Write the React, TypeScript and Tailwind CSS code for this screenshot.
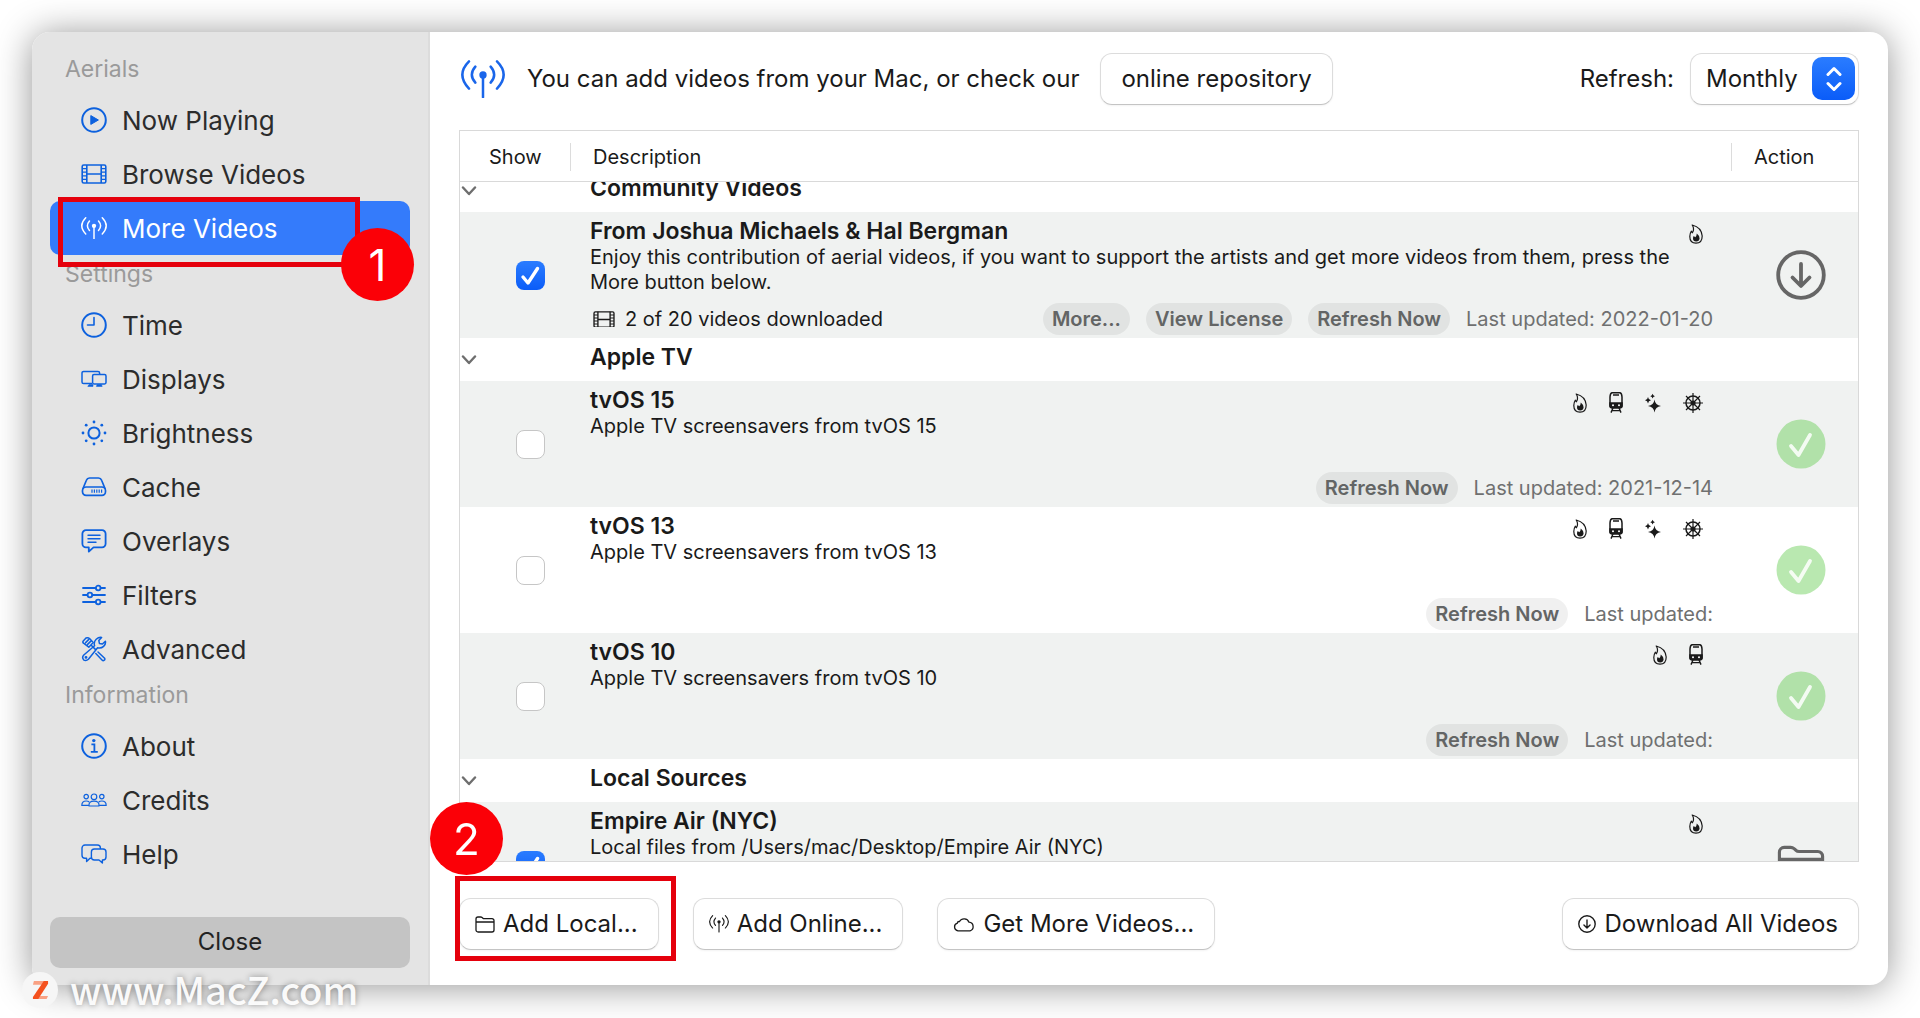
import React, { useLayoutEffect, useRef, useState } from "react";

type IconProps = { className?: string };

const AntennaIcon = ({ className }: IconProps) => (
  <svg viewBox="0 0 132 116" fill="none" stroke="currentColor" strokeWidth="7.5" strokeLinecap="round" className={className}>
    <path d="M24 4Q-16 44 24 86M108 4Q148 44 108 86M43 20Q22 44 43 68M89 20Q110 44 89 68M66 45V112" />
    <circle cx="66" cy="45" r="11" fill="currentColor" stroke="none" />
  </svg>
);

const PlayIcon = ({ className }: IconProps) => (
  <svg viewBox="0 0 26 26" fill="none" stroke="currentColor" strokeWidth="2" className={className}>
    <circle cx="13" cy="13" r="11.8" />
    <path d="M9.8 8.6v8.8l7.6-4.4z" fill="currentColor" strokeWidth="1" strokeLinejoin="round" />
  </svg>
);

const FilmIcon = ({ className }: IconProps) => (
  <svg viewBox="0 0 26 20" fill="none" stroke="currentColor" strokeWidth="1.6" className={className}>
    <rect x="1.2" y="1" width="23.6" height="18" rx="1.6" />
    <path d="M5.8 1v18M20.2 1v18M5.8 10h14.4" />
    <path d="M1.2 4.6h4.6M1.2 8.2h4.6M1.2 11.8h4.6M1.2 15.4h4.6M20.2 4.6h4.6M20.2 8.2h4.6M20.2 11.8h4.6M20.2 15.4h4.6" strokeWidth="1.2" />
  </svg>
);

const ClockIcon = ({ className }: IconProps) => (
  <svg viewBox="0 0 26 26" fill="none" stroke="currentColor" strokeWidth="2" className={className}>
    <circle cx="13" cy="13" r="11.8" />
    <path d="M13 5.5V13H6.5" strokeWidth="1.6" strokeLinecap="round" strokeLinejoin="round" />
  </svg>
);

const DisplaysIcon = ({ className }: IconProps) => (
  <svg viewBox="0 0 26 18" fill="none" stroke="currentColor" strokeWidth="1.5" className={className}>
    <path d="M11 13.6H2.6A1.6 1.6 0 0 1 1 12V3a1.6 1.6 0 0 1 1.6-1.6H17A1.6 1.6 0 0 1 18.6 3v1.4" />
    <rect x="11.6" y="4.6" width="13.4" height="9.4" rx="1.4" />
    <path d="M8 14.6h4v1.8H6.8zM16.2 14.6h4.2l.8 1.8h-5.8z" fill="currentColor" strokeWidth="0.6" />
  </svg>
);

const SunIcon = ({ className }: IconProps) => (
  <svg viewBox="0 0 26 26" fill="currentColor" className={className}>
    <circle cx="13" cy="13" r="5.6" fill="none" stroke="currentColor" strokeWidth="2" />
    <circle cx="13" cy="2" r="1.4" />
    <circle cx="13" cy="24" r="1.4" />
    <circle cx="2" cy="13" r="1.4" />
    <circle cx="24" cy="13" r="1.4" />
    <circle cx="5.2" cy="5.2" r="1.4" />
    <circle cx="20.8" cy="5.2" r="1.4" />
    <circle cx="5.2" cy="20.8" r="1.4" />
    <circle cx="20.8" cy="20.8" r="1.4" />
  </svg>
);

const DriveIcon = ({ className }: IconProps) => (
  <svg viewBox="0 0 26 20" fill="none" stroke="currentColor" strokeWidth="1.7" className={className}>
    <path d="M1.8 12 5.4 3.2Q6.2 1 8.5 1h9q2.3 0 3.1 2.2L24.2 12" />
    <rect x="1.5" y="10" width="23" height="8.4" rx="3.6" />
    <path d="M11 12.6v3.2M13.4 12.6v3.2M15.8 12.6v3.2M18.2 12.6v3.2M20.6 12.6v3.2" strokeWidth="1.2" />
  </svg>
);

const BubbleIcon = ({ className }: IconProps) => (
  <svg viewBox="0 0 26 24" fill="none" stroke="currentColor" strokeWidth="1.8" strokeLinejoin="round" className={className}>
    <path d="M5 1.2h16a3.6 3.6 0 0 1 3.6 3.6v10a3.6 3.6 0 0 1-3.6 3.6h-8.5L7.8 22.6v-4.2H5a3.6 3.6 0 0 1-3.6-3.6v-10A3.6 3.6 0 0 1 5 1.2z" />
    <path d="M7 6.3h12M7 9.8h12M7 13.3h8" strokeWidth="1.4" strokeLinecap="round" />
  </svg>
);

const SlidersIcon = ({ className }: IconProps) => (
  <svg viewBox="0 0 26 22" fill="none" stroke="currentColor" strokeWidth="1.8" strokeLinecap="round" className={className}>
    <path d="M2 4h12.6M20 4h4M2 11h4.2M11.6 11H24M2 18h12.6M20 18h4" />
    <circle cx="17.2" cy="4" r="2.3" />
    <circle cx="8.9" cy="11" r="2.3" />
    <circle cx="17.2" cy="18" r="2.3" />
  </svg>
);

const ToolsIcon = ({ className }: IconProps) => (
  <svg viewBox="0 0 26 26" fill="none" stroke="currentColor" strokeWidth="1.5" strokeLinejoin="round" strokeLinecap="round" className={className}>
    <path d="M2 5.2 5 2q2-1 3.8.8l3.4 3.8-4.4 4.6-4.6-3.6Q1.4 6.8 2 5.2zM4.6 6.6l3-3M6.6 8.4l3-3" />
    <path d="M10.5 9.5 14.6 13.6M17 16l6.6 6.2q.8 1.6-.6 2.2-1 .6-2-.4L14.8 17.6" />
    <path d="M13.6 9.8Q12.4 6 15.2 3.2 17.6 1 20.6 1.4L17.8 4.4l.6 3 3 .6 3-2.8q.6 3-1.8 5.2-2.6 2.4-6 1.4L7.4 23.2q-2.4 2.2-4.8.6-2-2.2.2-4.8z" />
    <circle cx="5" cy="21.4" r=".7" />
  </svg>
);

const InfoIcon = ({ className }: IconProps) => (
  <svg viewBox="0 0 26 26" fill="none" stroke="currentColor" strokeWidth="2" className={className}>
    <circle cx="13" cy="13" r="11.8" />
    <circle cx="12.8" cy="7.6" r="1.7" fill="currentColor" stroke="none" />
    <path d="M10.4 11.4h3v7.2M9.8 18.8h7" strokeWidth="1.8" />
  </svg>
);

const PeopleIcon = ({ className }: IconProps) => (
  <svg viewBox="0 0 26 14" fill="none" stroke="currentColor" strokeWidth="1.2" strokeLinejoin="round" className={className}>
    <circle cx="13" cy="3.8" r="2.8" />
    <circle cx="5.2" cy="3.6" r="2.2" />
    <circle cx="20.8" cy="3.6" r="2.2" />
    <path d="M8 13q-.6-4.8 5-4.8T18 13zM7.4 12.4H.8Q.8 8 5.2 8q2 0 3 1M18.6 12.4h6.6Q25.2 8 20.8 8q-2 0-3 1" />
  </svg>
);

const ChatsIcon = ({ className }: IconProps) => (
  <svg viewBox="0 0 26 20" fill="none" stroke="currentColor" strokeWidth="1.4" strokeLinejoin="round" className={className}>
    <path d="M10.8 14.2H9L5.6 17.6v-3.4H4a3 3 0 0 1-3-3V4a3 3 0 0 1 3-3h12.4a3 3 0 0 1 3 3v1" />
    <path d="M13.4 5H22a3 3 0 0 1 3 3v5a3 3 0 0 1-3 3h-.6v3L18 16h-4.6a3 3 0 0 1-3-3V8a3 3 0 0 1 3-3z" />
  </svg>
);

const FolderIcon = ({ className }: IconProps) => (
  <svg viewBox="0 0 20 17" fill="none" stroke="currentColor" strokeWidth="1.3" strokeLinejoin="round" className={className}>
    <path d="M1 14V3a2 2 0 0 1 2-2h2.7q.8 0 1.4.5l.8.7q.5.5 1.3.5H17a2 2 0 0 1 2 2V14a2 2 0 0 1-2 2H3a2 2 0 0 1-2-2zM1 6h18" />
  </svg>
);

const CloudIcon = ({ className }: IconProps) => (
  <svg viewBox="0 0 22 15" fill="none" stroke="currentColor" strokeWidth="1.3" className={className}>
    <path d="M5 13.8a3.9 3.9 0 0 1-.7-7.6q.2-1.9 2.2-1.7A5.3 5.3 0 0 1 16 5.2a4.4 4.4 0 0 1 1 8.6z" />
  </svg>
);

const DownloadIcon = ({ className }: IconProps) => (
  <svg viewBox="0 0 50 50" fill="none" stroke="currentColor" strokeWidth="3.8" strokeLinecap="round" strokeLinejoin="round" className={className}>
    <circle cx="25" cy="25" r="22.8" />
    <path d="M25 14v21.5M16.5 27.5 25 36l8.5-8.5" />
  </svg>
);

const FlameIcon = () => (
  <svg viewBox="0 0 14 20" fill="none" stroke="currentColor" strokeWidth="1.2" strokeLinejoin="round" className="h-5 w-[14px]">
    <path d="M3.2 1Q12.6 3.4 13.2 12 13.2 19.2 7 19.2.8 19 .8 12.4.8 9.6 2.4 7.2l1 1.6Q5.8 5 3.2 1z" />
    <path d="M7.8 9.4q3 2.4 2.8 5Q10.2 17.4 7.2 17.4 4 17.2 4 14.4q0-1.4.8-2.4l1.4 1.2q1.6-1.6 1.6-3.8z" fill="currentColor" stroke="none" />
  </svg>
);

const TramIcon = () => (
  <svg viewBox="0 0 14 21" fill="none" stroke="currentColor" strokeWidth="1.5" className="h-[21px] w-[14px]">
    <path d="M3 .8h8q1.8.6 2 4.2v8.6q0 2.2-2 2.2H3q-2 0-2-2.2V5Q1.2 1.4 3 .8zM4 3h6" />
    <path d="M1 11h12v2.6q0 2.2-2 2.2H3q-2 0-2-2.2z" fill="currentColor" />
    <circle cx="4" cy="13.2" r="1" fill="#fff" stroke="none" />
    <circle cx="10" cy="13.2" r="1" fill="#fff" stroke="none" />
    <path d="M4 16 2 20.6M10 16l2 4.6M3 18.6h8" strokeWidth="1.4" />
  </svg>
);

const SparklesIcon = () => (
  <svg viewBox="0 0 16 20" fill="currentColor" className="h-5 w-4">
    <path d="M9.5 6.5q.7 5.8 6.5 6.5-5.8.7-6.5 6.5Q8.8 13.7 3 13q5.8-.7 6.5-6.5zM3 4q.4 2.9 3 3.3-2.6.4-3 3.3Q2.6 7.7 0 7.3 2.6 6.9 3 4zM7.6.8q.4 2 2.3 2.4-1.9.4-2.3 2.4-.4-2-2.3-2.4 1.9-.4 2.3-2.4z" />
  </svg>
);

const HelmIcon = () => (
  <svg viewBox="0 0 20 20" fill="none" stroke="currentColor" strokeWidth="1.2" className="size-5">
    <circle cx="10" cy="10" r="7" strokeWidth="1.5" />
    <circle cx="10" cy="10" r="2" fill="currentColor" />
    <path d="M10 0v20M0 10h20M3 3l14 14M17 3 3 17" />
  </svg>
);

const tagIcons = {
  flame: FlameIcon,
  tram: TramIcon,
  sparkles: SparklesIcon,
  helm: HelmIcon,
};

const menu = [
  {
    heading: "Aerials",
    items: [
      { label: "Now Playing", icon: <PlayIcon className="w-[26px]" /> },
      { label: "Browse Videos", icon: <FilmIcon className="w-[26px]" /> },
      { label: "More Videos", icon: <AntennaIcon className="w-[26px]" /> },
    ],
  },
  {
    heading: "Settings",
    items: [
      { label: "Time", icon: <ClockIcon className="w-[26px]" /> },
      { label: "Displays", icon: <DisplaysIcon className="w-[26px]" /> },
      { label: "Brightness", icon: <SunIcon className="w-[26px]" /> },
      { label: "Cache", icon: <DriveIcon className="w-[26px]" /> },
      { label: "Overlays", icon: <BubbleIcon className="w-[26px]" /> },
      { label: "Filters", icon: <SlidersIcon className="w-[26px]" /> },
      { label: "Advanced", icon: <ToolsIcon className="w-[26px]" /> },
    ],
  },
  {
    heading: "Information",
    items: [
      { label: "About", icon: <InfoIcon className="w-[26px]" /> },
      { label: "Credits", icon: <PeopleIcon className="w-[26px]" /> },
      { label: "Help", icon: <ChatsIcon className="w-[26px]" /> },
    ],
  },
];

interface Source {
  name: string;
  description: string;
  checked: boolean;
  striped: boolean;
  tags: (keyof typeof tagIcons)[];
  progress?: string;
  actions: string[];
  updated?: string;
  status: "download" | "done" | "folder";
}

const groups: { name: string; sources: Source[] }[] = [
  {
    name: "Community Videos",
    sources: [
      {
        name: "From Joshua Michaels & Hal Bergman",
        description:
          "Enjoy this contribution of aerial videos, if you want to support the artists and get more videos from them, press the More button below.",
        checked: true,
        striped: true,
        tags: ["flame"],
        progress: "2 of 20 videos downloaded",
        actions: ["More...", "View License", "Refresh Now"],
        updated: "Last updated: 2022-01-20",
        status: "download",
      },
    ],
  },
  {
    name: "Apple TV",
    sources: [
      {
        name: "tvOS 15",
        description: "Apple TV screensavers from tvOS 15",
        checked: false,
        striped: true,
        tags: ["flame", "tram", "sparkles", "helm"],
        actions: ["Refresh Now"],
        updated: "Last updated: 2021-12-14",
        status: "done",
      },
      {
        name: "tvOS 13",
        description: "Apple TV screensavers from tvOS 13",
        checked: false,
        striped: false,
        tags: ["flame", "tram", "sparkles", "helm"],
        actions: ["Refresh Now"],
        updated: "Last updated:",
        status: "done",
      },
      {
        name: "tvOS 10",
        description: "Apple TV screensavers from tvOS 10",
        checked: false,
        striped: true,
        tags: ["flame", "tram"],
        actions: ["Refresh Now"],
        updated: "Last updated:",
        status: "done",
      },
    ],
  },
  {
    name: "Local Sources",
    sources: [
      {
        name: "Empire Air (NYC)",
        description: "Local files from /Users/mac/Desktop/Empire Air (NYC)",
        checked: true,
        striped: true,
        tags: ["flame"],
        actions: [],
        status: "folder",
      },
    ],
  },
];

const StepBadge = ({ step, className }: { step: number; className: string }) => (
  <span
    className={`pointer-events-none absolute z-30 flex size-[73px] items-center justify-center rounded-full bg-[#fb0007] text-[44px] text-white ${className}`}
  >
    {step}
  </span>
);

const PushButton = ({ icon, children }: { icon?: React.ReactNode; children: React.ReactNode }) => (
  <button
    type="button"
    className={`flex h-[52px] items-center gap-2 rounded-xl border border-[#dcdcdc] border-b-[#c4c4c4] bg-white pr-5 text-2xl whitespace-nowrap shadow-xs ${
      icon ? "pl-[15px]" : "pl-5"
    }`}
  >
    {icon}
    {children}
  </button>
);

const StatusIcon = ({ status }: { status: Source["status"] }) => {
  if (status === "download") return <DownloadIcon className="size-[50px]" />;
  if (status === "folder") return <FolderIcon className="w-[48px]" />;
  return (
    <svg viewBox="0 0 50 50" className="size-[50px]">
      <circle cx="25" cy="25" r="24.5" fill="#6ace57" fillOpacity=".47" />
      <path d="m15 27 7.500 9 11.500-20" fill="none" stroke="#fff" strokeOpacity=".85" strokeWidth="3.8" strokeLinecap="round" strokeLinejoin="round" />
    </svg>
  );
};

const SourceRow = ({ source }: { source: Source }) => {
  const [checked, setChecked] = useState(source.checked);

  return (
    <tr className={source.striped ? "bg-[#f0f2f1]" : "bg-white"}>
      <td className="h-[126px] p-0">
        <label className="relative ml-[56px] block size-[29px]">
          <input
            type="checkbox"
            aria-label={source.name}
            checked={checked}
            onChange={(e) => setChecked(e.target.checked)}
            className="block size-[29px] appearance-none rounded-lg border border-[#c6c6c6] bg-white checked:border-0 checked:bg-linear-to-b checked:from-[#2a7cff] checked:to-[#0a5cf8]"
          />
          {checked && (
            <svg viewBox="0 0 29 29" className="pointer-events-none absolute inset-0 size-[29px]">
              <path d="m7 16 5 6 9.500-14.500" fill="none" stroke="#fff" strokeWidth="3.4" strokeLinecap="round" strokeLinejoin="round" />
            </svg>
          )}
        </label>
      </td>
      <td className="h-[126px] p-0">
        <div className="flex h-[126px] flex-col pt-1.5 pr-[18px] pb-[3px]">
          <div className="flex items-center justify-between pr-2.5">
            <h3 className="text-[23px] leading-[27px] font-semibold">{source.name}</h3>
            <div className="flex h-[27px] items-center gap-[22px] pt-1">
              {source.tags.map((tag) => {
                const Tag = tagIcons[tag];
                return <Tag key={tag} />;
              })}
            </div>
          </div>
          <p className="text-xl leading-[25px]">{source.description}</p>
          <div className="mt-auto flex h-8 items-center gap-4 text-xl">
            {source.progress && (
              <span className="flex items-center gap-2.5 pl-[3px]">
                <FilmIcon className="w-[22px]" />
                {source.progress}
              </span>
            )}
            <span className="flex-1" />
            {source.actions.map((action) => (
              <button
                key={action}
                type="button"
                className="h-8 rounded-full bg-black/6 px-[9px] font-semibold whitespace-nowrap text-[#636565]"
              >
                {action}
              </button>
            ))}
            {source.updated && <span className="whitespace-nowrap text-[#6f7070]">{source.updated}</span>}
          </div>
        </div>
      </td>
      <td className="h-[126px] p-0">
        <button type="button" aria-label={source.status} className="ml-11 flex size-[52px] items-center justify-center text-[#666]">
          <StatusIcon status={source.status} />
        </button>
      </td>
    </tr>
  );
};

const SourceTable = () => {
  const scroller = useRef<HTMLDivElement>(null);

  useLayoutEffect(() => {
    if (scroller.current) scroller.current.scrollTop = 13;
  }, []);

  return (
    <div ref={scroller} className="min-h-0 flex-1 overflow-y-auto border border-[#d9d9d9] [scrollbar-width:none]">
      <table className="w-full table-fixed border-separate border-spacing-0 text-left">
        <colgroup>
          <col className="w-[130px]" />
          <col />
          <col className="w-[127px]" />
        </colgroup>
        <thead className="sticky top-0 z-10 bg-white text-xl">
          <tr>
            <th className="h-[51px] border-b border-[#d9d9d9] p-0 pt-0.5 font-normal">
              <div className="mr-[19px] flex h-7 items-center border-r border-[#dcdcdc] pl-[29px]">Show</div>
            </th>
            <th className="h-[51px] border-b border-[#d9d9d9] p-0 pt-0.5 pl-[3px] font-normal">Description</th>
            <th className="h-[51px] border-b border-[#d9d9d9] p-0 pt-0.5 font-normal">
              <div className="flex h-7 items-center border-l border-[#dcdcdc] pl-[22px]">Action</div>
            </th>
          </tr>
        </thead>
        <tbody>
          {groups.map((group) => (
            <React.Fragment key={group.name}>
              <tr>
                <td className="h-[43px] p-0">
                  <button type="button" aria-label={`Toggle ${group.name}`} className="ml-px block">
                    <svg viewBox="0 0 16 10" fill="none" stroke="#6e6e6e" strokeWidth="2.4" strokeLinecap="round" strokeLinejoin="round" className="w-4">
                      <path d="m2 1.500 6 6.500 6-6.500" />
                    </svg>
                  </button>
                </td>
                <td colSpan={2} className="h-[43px] p-0 pb-1.5 text-[23px] leading-[26px] font-semibold">
                  {group.name}
                </td>
              </tr>
              {group.sources.map((source) => (
                <SourceRow key={source.name} source={source} />
              ))}
            </React.Fragment>
          ))}
        </tbody>
      </table>
    </div>
  );
};

const Sidebar = () => {
  const [active, setActive] = useState("More Videos");

  return (
    <aside className="flex w-[398px] shrink-0 flex-col rounded-l-[18px] border-r-2 border-[#dcdcdc] bg-[#e4e4e4] px-[18px] pt-[18px] pb-[17px]">
      <nav>
        {menu.map((section) => (
          <div key={section.heading}>
            <h2 className="h-[43px] pl-[15px] text-[23px] leading-[38px] text-[#9a9a9a]">{section.heading}</h2>
            {section.items.map((item) => (
              <div key={item.label} className="relative">
                <button
                  type="button"
                  onClick={() => setActive(item.label)}
                  className={`flex h-[54px] w-full items-center gap-[15px] rounded-[10px] pl-[31px] text-[26px] ${
                    active === item.label ? "bg-[#347bfb] text-white" : "text-[#2c2c2c]"
                  }`}
                >
                  <span className={active === item.label ? "text-white" : "text-[#0d61de]"}>{item.icon}</span>
                  {item.label}
                </button>
                {item.label === "More Videos" && (
                  <>
                    <span className="pointer-events-none absolute -top-1 left-2 z-20 h-[70px] w-[302px] border-[5px] border-[#e5000c]" />
                    <StepBadge step={1} className="top-[27px] left-[291px]" />
                  </>
                )}
              </div>
            ))}
          </div>
        ))}
      </nav>
      <button type="button" className="mt-auto h-[51px] rounded-[10px] bg-[#c4c4c4] pb-0.5 text-2xl text-[#222]">
        Close
      </button>
    </aside>
  );
};

const App: React.FC = () => {
  const [refresh, setRefresh] = useState("Monthly");

  return (
    <div className="relative flex h-screen bg-white px-8 pt-8 pb-[33px] font-['Inter',sans-serif] text-[#1a1a1a]">
      <div className="flex min-w-0 flex-1 rounded-[18px] bg-white shadow-[0_2px_36px_rgba(0,0,0,0.42)]">
        <Sidebar />
        <main className="flex min-w-0 flex-1 flex-col px-[29px] pt-[21px] pb-[35px]">
          <header className="mb-[25px] flex h-[52px] items-center text-2xl">
            <AntennaIcon className="mr-[22px] ml-0.5 w-11 text-[#1a66ea]" />
            <p className="mr-[21px]">You can add videos from your Mac, or check our</p>
            <PushButton>online repository</PushButton>
            <label htmlFor="refresh" className="mr-4 ml-auto">
              Refresh:
            </label>
            <div className="relative">
              <select
                id="refresh"
                value={refresh}
                onChange={(e) => setRefresh(e.target.value)}
                className="h-[52px] w-[169px] appearance-none rounded-xl border border-[#dcdcdc] border-b-[#c4c4c4] bg-white pl-[15px] shadow-xs"
              >
                <option>Daily</option>
                <option>Weekly</option>
                <option>Monthly</option>
              </select>
              <span className="pointer-events-none absolute top-1 right-1 flex size-[43px] items-center justify-center rounded-[10px] bg-linear-to-b from-[#2a7cff] to-[#0a5cf8]">
                <svg viewBox="0 0 16 26" fill="none" stroke="#fff" strokeWidth="3" strokeLinecap="round" strokeLinejoin="round" className="w-4">
                  <path d="m2 8.500 6-6 6 6M2 17.500l6 6 6-6" />
                </svg>
              </span>
            </div>
          </header>

          <SourceTable />

          <footer className="mt-9 flex items-center gap-[34px]">
            <div className="relative">
              <PushButton icon={<FolderIcon className="w-5" />}>Add Local...</PushButton>
              <span className="pointer-events-none absolute -top-[22px] -left-1 z-20 h-[85px] w-[221px] border-[5px] border-[#e5000c]" />
              <StepBadge step={2} className="-top-[96px] -left-[29px]" />
            </div>
            <PushButton icon={<AntennaIcon className="w-5" />}>Add Online...</PushButton>
            <PushButton icon={<CloudIcon className="w-[22px]" />}>Get More Videos...</PushButton>
            <div className="ml-auto">
              <PushButton icon={<DownloadIcon className="w-[18px]" />}>Download All Videos</PushButton>
            </div>
          </footer>
        </main>
      </div>

      <div className="pointer-events-none absolute bottom-2.5 left-[22px] z-40 flex h-9 items-center gap-3">
        <span className="flex size-9 items-center justify-center rounded-full bg-[#f6f6f6]">
          <svg viewBox="0 0 18 20" className="w-[17px]">
            <path d="M2 0h15l-3 4H1zM4 16h13l-2 4H1z" fill="#f9a184" />
            <path d="M12.500 0H17v3L6 20H1v-3z" fill="#f4511e" />
          </svg>
        </span>
        <span className="pb-1 font-['Noto_Sans_CJK_SC',sans-serif] text-[38px] font-medium text-white/95 [text-shadow:0_0_6px_rgba(0,0,0,0.4)]">
          www.MacZ.com
        </span>
      </div>
    </div>
  );
};

export default App;
